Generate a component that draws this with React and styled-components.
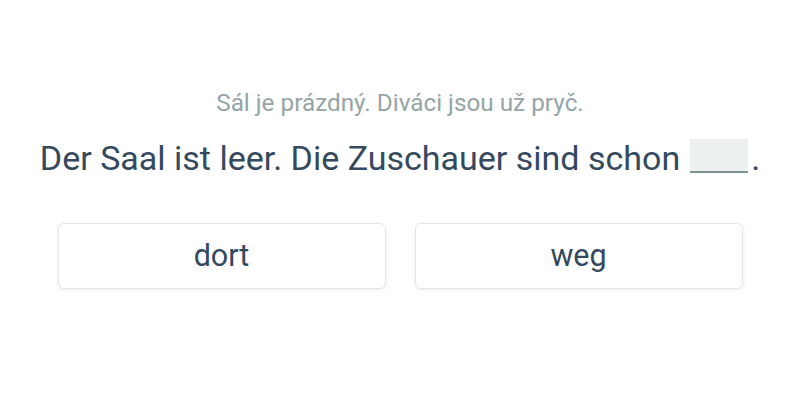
import React from "react";
import styled, { createGlobalStyle } from "styled-components";

const GlobalStyle = createGlobalStyle`
  body {
    margin: 0;
    background: #fff;
    font-family: Roboto, "Liberation Sans", sans-serif;
  }
`;

const Page = styled.div`
  width: 800px;
  height: 400px;
  display: flex;
  flex-direction: column;
  align-items: center;
  padding-top: 89px;
  box-sizing: border-box;
`;

const Hint = styled.p`
  margin: 0;
  font-size: 24.3px;
  line-height: 28px;
  color: #95a5a6;
`;

const Sentence = styled.p`
  margin: 21px 0 0 0;
  font-size: 34px;
  line-height: 40px;
  color: #34495e;
  display: flex;
  align-items: flex-end;
`;

const Blank = styled.span`
  display: inline-block;
  width: 58px;
  height: 32px;
  margin: 0 3px 5px 10px;
  background: #ecf0f1;
  border-bottom: 2px solid #7f9192;
`;

const Options = styled.div`
  display: grid;
  grid-template-columns: 328px 328px;
  gap: 29px;
  margin-top: 45px;
`;

const Option = styled.button`
  height: 66px;
  background: #fff;
  border: 1px solid #e3e6e8;
  border-radius: 6px;
  box-shadow: 0 1px 4px rgba(0, 0, 0, 0.08);
  font-family: Roboto, "Liberation Sans", sans-serif;
  font-size: 30.5px;
  color: #34495e;
  cursor: pointer;
  padding: 0 0 2px 0;
`;

const App = () => (
  <>
    <GlobalStyle />
    <Page>
      <Hint>Sál je prázdný. Diváci jsou už pryč.</Hint>
      <Sentence>
        Der Saal ist leer. Die Zuschauer sind schon
        <Blank />.
      </Sentence>
      <Options>
        <Option>dort</Option>
        <Option>weg</Option>
      </Options>
    </Page>
  </>
);

export default App;
